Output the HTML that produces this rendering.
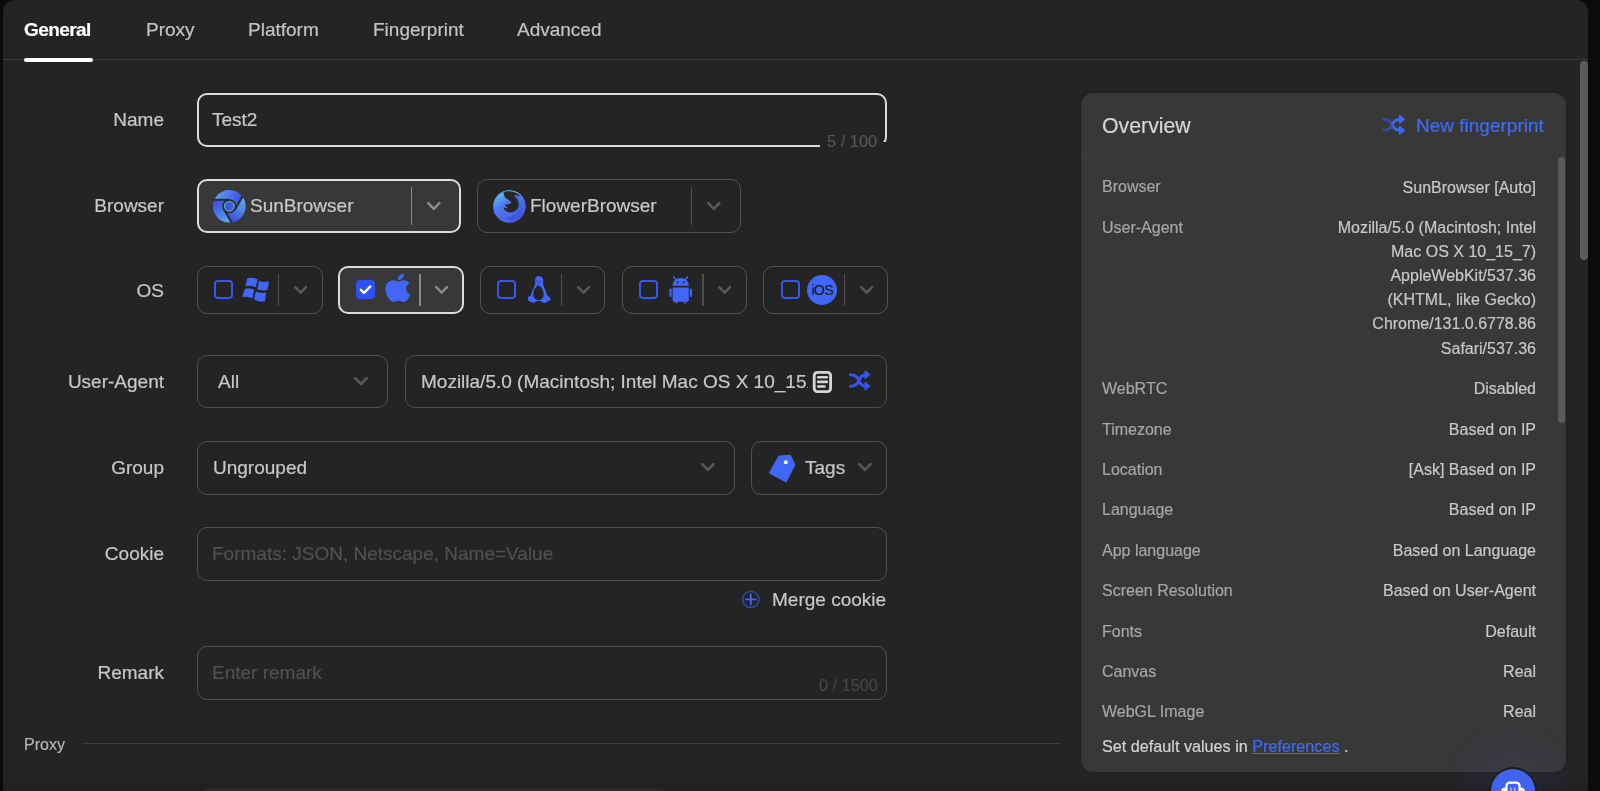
<!DOCTYPE html>
<html><head><meta charset="utf-8">
<style>
*{box-sizing:border-box;margin:0;padding:0}
html,body{-webkit-text-stroke:0.2px;width:1600px;height:791px;overflow:hidden;background:#0b0b0b;font-family:"Liberation Sans",sans-serif;position:relative}
.a{position:absolute}
#panel{position:absolute;left:3px;top:0;width:1585px;height:800px;background:#242424;border-radius:12px 12px 0 0}
.tab{position:absolute;top:18.8px;font-size:19px;color:#c4c4c4;line-height:22px;white-space:nowrap}
.tab.act{color:#fff;font-weight:bold;letter-spacing:-0.58px}
.lbl{position:absolute;right:1436px;font-size:19px;color:#c8c8c8;line-height:22px;white-space:nowrap;text-align:right}
.box{position:absolute;border:1.7px solid #525252;border-radius:10px}
.box.sel{border:2px solid #dcdcdc;background:#383838}
.txt{position:absolute;font-size:19px;color:#c8c8c8;line-height:22px;white-space:nowrap}
.ph{color:#505050}
.dv{position:absolute;width:1.5px;background:#4e4e4e}
svg{position:absolute;overflow:visible}
.chev{fill:none;stroke:#5a5a5a;stroke-width:2.5;stroke-linecap:round;stroke-linejoin:round}
.cb{position:absolute;width:19px;height:19px;border:2.5px solid #3456f5;border-radius:4px}
#ov{position:absolute;left:1081px;top:93px;width:485px;height:679px;background:#383838;border-radius:12px;box-shadow:0 0 3px rgba(0,0,0,0.25)}
.ol{position:absolute;left:1102px;font-size:16px;color:#a6a6a6;line-height:20px;white-space:nowrap}
.ovv{position:absolute;right:64px;font-size:16px;color:#c8c8c8;line-height:24.2px;white-space:nowrap;text-align:right}
</style></head><body><div id="root" style="position:absolute;left:0;top:0;width:1600px;height:791px;will-change:transform">
<div id="panel"></div>
<!-- tabs -->
<div class="tab act" style="left:24px">General</div>
<div class="tab" style="left:146px">Proxy</div>
<div class="tab" style="left:248px">Platform</div>
<div class="tab" style="left:373px">Fingerprint</div>
<div class="tab" style="left:517px">Advanced</div>
<div class="a" style="left:3px;top:59.2px;width:1585px;height:1px;background:#3a3a3a"></div>
<div class="a" style="left:24px;top:57.5px;width:69px;height:4px;border-radius:2px;background:#fff"></div>
<div class="a" style="left:1580px;top:61px;width:7.6px;height:199px;border-radius:4px;background:#5a5a5a"></div>

<!-- FORM -->
<!-- Name -->
<div class="lbl" style="top:109.3px">Name</div>
<div class="box sel" style="left:197px;top:93px;width:690px;height:54px;background:transparent"></div>
<div class="a" style="left:820px;top:142px;width:70px;height:8px;background:#242424"></div>
<div class="txt" style="left:212px;top:109.2px">Test2</div>
<div class="a" style="left:827px;top:132.2px;font-size:16.4px;color:#555;line-height:18px;white-space:nowrap">5 / 100</div>

<!-- Browser -->
<div class="lbl" style="top:195.3px">Browser</div>
<div class="box sel" style="left:197px;top:179px;width:264px;height:54px"></div>
<div class="txt" style="left:250px;top:195.2px">SunBrowser</div>
<div class="dv" style="left:410.5px;top:187px;height:38px;background:#8c8c8c"></div>
<svg style="left:427px;top:202px" width="14" height="9"><polyline class="chev" style="stroke:#8c8c8c" points="1.2,1.2 6.8,6.8 12.4,1.2"/></svg>
<div class="box" style="left:477px;top:179px;width:264px;height:54px"></div>
<div class="txt" style="left:530px;top:195.2px">FlowerBrowser</div>
<div class="dv" style="left:690.5px;top:187px;height:38px"></div>
<svg style="left:707px;top:202px" width="14" height="9"><polyline class="chev" points="1.2,1.2 6.8,6.8 12.4,1.2"/></svg>

<!-- OS -->
<div class="lbl" style="top:280.3px">OS</div>
<div class="box" style="left:197px;top:265.5px;width:125.5px;height:48px"></div>
<div class="box sel" style="left:338px;top:265.5px;width:125.5px;height:48px"></div>
<div class="box" style="left:480px;top:265.5px;width:125px;height:48px"></div>
<div class="box" style="left:621.5px;top:265.5px;width:125px;height:48px"></div>
<div class="box" style="left:763px;top:265.5px;width:125px;height:48px"></div>
<div class="cb" style="left:214px;top:280px"></div>
<div class="a" style="left:356px;top:280px;width:19px;height:19px;border-radius:4px;background:#2f50f2"></div>
<svg style="left:356px;top:280px" width="19" height="19"><polyline points="4.8,9.8 8,12.8 14.2,6.6" fill="none" stroke="#fff" stroke-width="2.4" stroke-linecap="round" stroke-linejoin="round"/></svg>
<div class="cb" style="left:497px;top:280px"></div>
<div class="cb" style="left:639px;top:280px"></div>
<div class="cb" style="left:780.5px;top:280px"></div>
<div class="dv" style="left:277.8px;top:273.5px;height:32px"></div>
<div class="dv" style="left:419.3px;top:273.5px;height:32px;background:#8a8a8a"></div>
<div class="dv" style="left:560.8px;top:273.5px;height:32px"></div>
<div class="dv" style="left:702.3px;top:273.5px;height:32px"></div>
<div class="dv" style="left:843.8px;top:273.5px;height:32px"></div>
<svg style="left:293.5px;top:285.5px" width="14" height="9"><polyline class="chev" points="1.2,1.2 6.6,6.6 12,1.2"/></svg>
<svg style="left:435px;top:285.5px" width="14" height="9"><polyline class="chev" style="stroke:#8a8a8a" points="1.2,1.2 6.6,6.6 12,1.2"/></svg>
<svg style="left:576.5px;top:285.5px" width="14" height="9"><polyline class="chev" points="1.2,1.2 6.6,6.6 12,1.2"/></svg>
<svg style="left:718px;top:285.5px" width="14" height="9"><polyline class="chev" points="1.2,1.2 6.6,6.6 12,1.2"/></svg>
<svg style="left:859.5px;top:285.5px" width="14" height="9"><polyline class="chev" points="1.2,1.2 6.6,6.6 12,1.2"/></svg>

<!-- User-Agent -->
<div class="lbl" style="top:371.3px">User-Agent</div>
<div class="box" style="left:197px;top:354.5px;width:191px;height:53.5px"></div>
<div class="txt" style="left:218px;top:371.2px">All</div>
<svg style="left:354px;top:377px" width="15" height="9"><polyline class="chev" points="1.2,1.2 7,7 12.8,1.2"/></svg>
<div class="box" style="left:404.5px;top:354.5px;width:482.5px;height:53.5px"></div>
<div class="txt" style="left:421px;top:371.2px">Mozilla/5.0 (Macintosh; Intel Mac OS X 10_15<span style="font-size:7px">.</span></div>

<!-- Group -->
<div class="lbl" style="top:456.9px">Group</div>
<div class="box" style="left:197px;top:441px;width:538px;height:53.5px"></div>
<div class="txt" style="left:213px;top:457.2px">Ungrouped</div>
<svg style="left:700.5px;top:463px" width="15" height="9"><polyline class="chev" points="1.2,1.2 6.9,6.9 12.6,1.2"/></svg>
<div class="box" style="left:751px;top:441px;width:136px;height:53.5px"></div>
<div class="txt" style="left:805px;top:457.2px">Tags</div>
<svg style="left:858px;top:463px" width="15" height="9"><polyline class="chev" points="1.2,1.2 6.9,6.9 12.6,1.2"/></svg>

<!-- Cookie -->
<div class="lbl" style="top:543.3px">Cookie</div>
<div class="box" style="left:197px;top:527px;width:690px;height:53.5px"></div>
<div class="txt ph" style="left:212px;top:543.2px">Formats: JSON, Netscape, Name=Value</div>
<div class="txt" style="left:772px;top:589.2px">Merge cookie</div>

<!-- Remark -->
<div class="lbl" style="top:662.3px">Remark</div>
<div class="box" style="left:197px;top:646px;width:690px;height:53.5px"></div>
<div class="txt ph" style="left:212px;top:662.2px">Enter remark</div>
<div class="a" style="left:819px;top:676px;font-size:16.3px;color:#464646;line-height:18px;white-space:nowrap">0 / 1500</div>

<!-- Proxy section -->
<div class="a" style="left:24px;top:735px;font-size:16px;color:#b4b4b4;line-height:20px">Proxy</div>
<div class="a" style="left:82px;top:743px;width:978px;height:1px;background:#3c3c3c"></div>
<div class="a" style="left:200px;top:788px;width:468px;height:20px;border-radius:10px;background:#2e2e2e"></div>
<div class="a" style="left:3px;top:774px;width:1585px;height:17px;background:linear-gradient(rgba(0,0,0,0),rgba(0,0,0,0.12))"></div>

<!-- OVERVIEW -->
<div id="ov"></div>
<div class="a" style="left:1102px;top:114px;font-size:21.3px;color:#d6d6d6;line-height:24px;white-space:nowrap">Overview</div>
<div class="a" style="left:1416px;top:114px;font-size:19px;color:#3e6cf4;line-height:24px;white-space:nowrap">New fingerprint</div>
<div class="a" style="left:1081px;top:156px;width:485px;height:1px;background:#3a3a3a"></div>
<div class="a" style="left:1558px;top:157px;width:7px;height:265.5px;border-radius:4px;background:#5a5a5a"></div>

<div class="ol" style="top:177.2px">Browser</div>
<div class="ovv" style="top:175.6px">SunBrowser [Auto]</div>
<div class="ol" style="top:217.6px">User-Agent</div>
<div class="ovv" style="top:215.6px">Mozilla/5.0 (Macintosh; Intel<br>Mac OS X 10_15_7)<br>AppleWebKit/537.36<br>(KHTML, like Gecko)<br>Chrome/131.0.6778.86<br>Safari/537.36</div>
<div class="ol" style="top:379.4px">WebRTC</div><div class="ovv" style="top:377.3px">Disabled</div>
<div class="ol" style="top:419.8px">Timezone</div><div class="ovv" style="top:417.7px">Based on IP</div>
<div class="ol" style="top:459.9px">Location</div><div class="ovv" style="top:457.8px">[Ask] Based on IP</div>
<div class="ol" style="top:500.3px">Language</div><div class="ovv" style="top:498.2px">Based on IP</div>
<div class="ol" style="top:540.9px">App language</div><div class="ovv" style="top:538.8px">Based on Language</div>
<div class="ol" style="top:581.3px">Screen Resolution</div><div class="ovv" style="top:579.2px">Based on User-Agent</div>
<div class="ol" style="top:622.0px">Fonts</div><div class="ovv" style="top:619.9px">Default</div>
<div class="ol" style="top:662.3px">Canvas</div><div class="ovv" style="top:660.2px">Real</div>
<div class="ol" style="top:702.4px">WebGL Image</div><div class="ovv" style="top:700.3px">Real</div>
<div class="a" style="left:1102px;top:722.5px;width:434px;height:1px;background:#3b3b3b"></div>
<div class="a" style="left:1102px;top:736.4px;font-size:16.2px;color:#d4d4d4;line-height:20px;white-space:nowrap">Set default values in <span style="color:#3e6cf4;text-decoration:underline">Preferences</span> .</div>
<div class="a" style="left:1440px;top:720px;width:145px;height:71px;background:radial-gradient(circle at 72px 70px, rgba(70,90,220,0.10) 0, rgba(70,90,220,0.05) 40px, rgba(70,90,220,0) 70px)"></div>
<div class="a" style="left:1489px;top:767px;width:48px;height:48px;border-radius:50%;background:#1e1e1e"></div>
<div class="a" style="left:1491px;top:769px;width:44px;height:44px;border-radius:50%;background:#4164f0"></div>

<!-- ICONS -->
<!-- SunBrowser -->
<svg style="left:212.9px;top:189.7px" width="32.6" height="32.6" viewBox="0 0 32 32">
 <defs>
  <linearGradient id="sb1" gradientUnits="userSpaceOnUse" x1="3" y1="6" x2="26" y2="12"><stop offset="0" stop-color="#5c9ef2"/><stop offset="1" stop-color="#3d52e2"/></linearGradient>
  <linearGradient id="sb2" gradientUnits="userSpaceOnUse" x1="30" y1="9" x2="17" y2="29"><stop offset="0" stop-color="#5eaaf2"/><stop offset="1" stop-color="#3c50e0"/></linearGradient>
  <linearGradient id="sb3" gradientUnits="userSpaceOnUse" x1="14" y1="31" x2="3" y2="12"><stop offset="0" stop-color="#5aa2f0"/><stop offset="1" stop-color="#3c52e2"/></linearGradient>
 </defs>
 <path d="M1.34 9.6 A16 16 0 0 1 28.87 6.5 L21.54 19.2 A6.4 6.4 0 0 0 16 9.6 Z" fill="url(#sb1)"/>
 <path d="M28.87 6.5 A16 16 0 0 1 17.8 31.9 L10.46 19.2 A6.4 6.4 0 0 0 21.54 19.2 Z" fill="url(#sb2)"/>
 <path d="M17.8 31.9 A16 16 0 0 1 1.34 9.6 L16 9.6 A6.4 6.4 0 0 0 10.46 19.2 Z" fill="url(#sb3)"/>
 <g stroke="#2b2b2b" stroke-width="1.9" fill="none">
  <line x1="16.5" y1="9.6" x2="0.5" y2="9.6"/>
  <line x1="21.3" y1="19.7" x2="29.3" y2="5.8"/>
  <line x1="10.7" y1="18.8" x2="18.7" y2="32.6"/>
 </g>
 <circle cx="16" cy="16" r="6.9" fill="#2b2b2b"/>
 <circle cx="16" cy="16" r="5.3" fill="#5cc0e6"/>
 <circle cx="16" cy="16" r="4.3" fill="#3f5ad8"/>
</svg>
<!-- FlowerBrowser -->
<svg style="left:493px;top:189.6px" width="32.6" height="32.6" viewBox="0 0 32 32">
 <defs>
  <linearGradient id="fg1" gradientUnits="userSpaceOnUse" x1="4" y1="3" x2="20" y2="30"><stop offset="0" stop-color="#5cc2ea"/><stop offset="0.4" stop-color="#507bee"/><stop offset="1" stop-color="#4a62e6"/></linearGradient>
  <linearGradient id="fg2" gradientUnits="userSpaceOnUse" x1="24" y1="2" x2="26" y2="26"><stop offset="0" stop-color="#5ccaea"/><stop offset="0.3" stop-color="#4a70ee"/><stop offset="1" stop-color="#3f55e0"/></linearGradient>
 </defs>
 <circle cx="16" cy="16.2" r="15.9" fill="url(#fg1)"/>
 <path d="M9.4 2.2 C13 0.4 20 0.2 24.5 2.8 C28 5 30.5 8 31.4 12 L31.9 16 C31.9 21 29 25.5 24 28 C20 30 14 30 10.5 27.5 C16 27.5 21.5 25 23.8 20.5 C26 16 25.2 10.5 21.5 8 Z" fill="url(#fg2)"/>
 <path d="M10.2 2 C13 1 18 0.8 22.5 2.6 C25 3.8 27 6 27.5 7.2 C25.5 5.8 23 5.2 20.6 5.6 C24 7.5 25.6 11 25.3 14.6 C24.9 19.6 20.8 22.3 16.6 22.1 C12.8 21.9 10.4 19.4 10.2 16.8 C11.6 18 13.4 18.2 14.5 17.6 C13 16.5 12 15.4 11.8 14 C14.4 14.4 17.2 13.8 18.2 12 C17 10.4 14.6 9.6 12.6 8.2 C11.2 6.6 10.6 4.4 10.2 2 Z" fill="#262626"/>
 <path d="M20.6 5.6 C23 5.2 25.5 5.8 27.5 7.2 C25 6.8 23.5 7.2 22.6 7.6 C24.6 9.6 25.6 12 25.3 14.6 C24.8 10.6 23 7.2 20.6 5.6 Z" fill="#4a66ea"/>
</svg>
<!-- Windows -->
<svg style="left:238px;top:272px" width="36" height="34" viewBox="0 0 36 34" fill="#4266f6">
 <path d="M9.2,6.6 Q14,4.4 19.6,7.4 L17.9,15.3 Q12.6,12.6 7.4,14.3 Z"/>
 <path d="M21,8.7 Q25.5,10.8 31,9.3 L29.4,18 Q24,19.2 19.2,17.3 Z"/>
 <path d="M6.9,16.8 Q11.5,15.1 16.2,17.7 L14.5,26.3 Q9.6,23.9 4.1,25 Z"/>
 <path d="M17.8,19.6 Q22.6,21.6 28.2,20.5 L26.8,29.3 Q21.2,30.6 16.1,27.6 Z"/>
</svg>
<!-- Apple -->
<svg style="left:380px;top:270px" width="34" height="34" viewBox="0 0 34 34">
 <g transform="translate(2.6,3.4) scale(1.27,1.19)" fill="#4266f6">
 <path d="M12.152 6.896c-.948 0-2.415-1.078-3.96-1.04-2.04.027-3.91 1.183-4.961 3.014-2.117 3.675-.546 9.103 1.519 12.09 1.013 1.454 2.208 3.09 3.792 3.039 1.52-.065 2.09-.987 3.935-.987 1.831 0 2.35.987 3.96.948 1.637-.026 2.676-1.48 3.676-2.948 1.156-1.688 1.636-3.325 1.662-3.415-.039-.013-3.182-1.221-3.220-4.857-.026-3.04 2.48-4.494 2.597-4.559-1.429-2.090-3.623-2.324-4.390-2.376-2-.156-3.675 1.090-4.610 1.090zM15.530 3.830c.843-1.012 1.400-2.427 1.245-3.830-1.207.052-2.662.805-3.532 1.818-.780.896-1.454 2.338-1.273 3.714 1.338.104 2.715-.688 3.559-1.701"/>
 </g>
</svg>
<!-- Linux -->
<svg style="left:522px;top:270px" width="34" height="36" viewBox="0 0 34 36">
 <path fill="#4266f6" d="M16.8,6.1 C14.6,6.1 13.1,7.8 13.1,10.4 L13.1,14.6 C12.4,16.6 11.3,18.4 10.4,20.6 C9.6,22.6 9.1,24.4 8.6,25.9 C7.4,26.2 6.2,26.6 5.9,27.4 C5.8,28.6 5.9,29.6 6.2,30.6 C7.8,31.6 9.6,32.4 11.4,32.8 C12.6,32.4 13.6,31.6 14.6,31.1 L18.6,31.1 C19.8,31.8 21,32.6 22.6,32.9 C24.6,32.2 26.6,31 28.7,29.4 C28.4,28.4 27.8,27.2 26.9,26.4 C25.9,26 25.2,25.4 24.7,24.6 C24.3,22.4 23.6,20.2 22.6,18.4 C21.9,17 21.3,15.8 21.2,14.6 L21.2,10.4 C21.2,7.8 19.2,6.1 16.8,6.1 Z"/>
 <path fill="#242424" d="M16.4,15.2 C19.4,16.8 21.7,20.6 21.7,24.2 C21.7,27.8 19.4,30 16.5,30 C13.6,30 11.3,27.8 11.3,24.2 C11.3,20.6 13.4,16.8 16.4,15.2 Z"/>
 <path fill="#4266f6" d="M5.9,27.4 C7.4,26.6 9.6,26.6 11,27.6 C12.6,28.6 14,30 14.6,31.1 C13.6,31.6 12.6,32.4 11.4,32.8 C9.6,32.4 7.8,31.6 6.2,30.6 Z"/>
 <path fill="#4266f6" d="M28.7,29.4 C27,28 25,27.2 23.4,27.4 C21.2,28 19.6,29.6 18.6,31.1 C19.8,31.8 21,32.6 22.6,32.9 C24.6,32.2 26.6,31 28.7,29.4 Z"/>
 <circle cx="15.1" cy="11.3" r="0.75" fill="#2c3c94"/><circle cx="18.3" cy="11.3" r="0.75" fill="#2c3c94"/>
 <path d="M15.6,13.2 L17.6,13.2 L16.6,14.3 Z" fill="#2c3c94"/>
</svg>
<!-- Android -->
<svg style="left:669px;top:276px" width="24" height="28" viewBox="0 0 24 28" fill="#4266f6">
 <line x1="4.6" y1="0.8" x2="6.6" y2="3.3" stroke="#4266f6" stroke-width="1.4" stroke-linecap="round"/>
 <line x1="18.6" y1="0.8" x2="16.6" y2="3.3" stroke="#4266f6" stroke-width="1.4" stroke-linecap="round"/>
 <path d="M3.6,9.7 C3.6,5.2 7.2,2.1 11.6,2.1 C16,2.1 19.8,5.2 19.8,9.7 Z"/>
 <circle cx="8.6" cy="6.2" r="0.95" fill="#242424"/><circle cx="14.6" cy="6.2" r="0.95" fill="#242424"/>
 <path d="M3.6,11.6 L19.8,11.6 L19.8,24.2 Q19.8,25.8 18.2,25.8 L5.2,25.8 Q3.6,25.8 3.6,24.2 Z"/>
 <rect x="6.4" y="24" width="2.2" height="3.4" rx="1"/><rect x="14.8" y="24" width="2.2" height="3.4" rx="1"/>
 <rect x="0.4" y="12.4" width="2.2" height="8.6" rx="1.1"/><rect x="20.8" y="12.4" width="2.2" height="8.6" rx="1.1"/>
</svg>
<!-- iOS -->
<div class="a" style="left:807px;top:275px;width:30.4px;height:30.4px;border-radius:50%;background:#4266f6"></div>
<div class="a" style="left:807px;top:281px;width:30.4px;text-align:center;font-size:14.2px;line-height:18px;color:#1e1e1e;letter-spacing:-0.7px">iOS</div>

<!-- UA doc icon -->
<svg style="left:812px;top:370px" width="21" height="24" viewBox="0 0 21 24">
 <rect x="2.2" y="2.4" width="16.4" height="19.2" rx="3.2" fill="none" stroke="#d6d6da" stroke-width="2.8"/>
 <g stroke="#d6d6da" stroke-width="2.6" stroke-linecap="round"><line x1="6.2" y1="7.2" x2="14.8" y2="7.2"/><line x1="6.2" y1="11.9" x2="14.8" y2="11.9"/><line x1="6.2" y1="16.5" x2="12.4" y2="16.5"/></g>
</svg>
<!-- UA shuffle -->
<svg style="left:849px;top:370px" width="22" height="22" viewBox="0 0 22 22">
 <g fill="none" stroke="#3454f6" stroke-width="3" stroke-linecap="round">
  <path d="M1.5,4.7 C6.4,4.7 8.5,6.6 9.9,10.5 C11.3,14.4 13.4,16.2 17.4,16.2"/>
  <path d="M1.5,16.3 C6.4,16.3 8.5,14.4 9.9,10.5 C11.3,6.6 13.4,4.7 17.4,4.7"/>
 </g>
 <g fill="#3454f6" stroke="#3454f6" stroke-width="1.5" stroke-linejoin="round">
  <polygon points="16.2,1.2 20.4,4.7 16.2,8.2"/>
  <polygon points="16.2,12.7 20.4,16.2 16.2,19.7"/>
 </g>
</svg>
<!-- Tag -->
<svg style="left:768px;top:454px" width="28" height="29" viewBox="0 0 28 29">
 <polygon points="11.4,2.6 22,2 26,10.8 17.8,27 2.4,18.6" fill="#4266f6" stroke="#4266f6" stroke-width="2.4" stroke-linejoin="round"/>
 <circle cx="17.8" cy="8.2" r="2" fill="#fff"/>
</svg>
<!-- Merge plus -->
<svg style="left:741px;top:590.3px" width="20" height="20" viewBox="0 0 20 20">
 <circle cx="9.8" cy="9.4" r="8.1" fill="none" stroke="#30449c" stroke-width="1.8"/>
 <g stroke="#3d62f4" stroke-width="1.9" stroke-linecap="round"><line x1="4.9" y1="9.4" x2="14.7" y2="9.4"/><line x1="9.8" y1="4.5" x2="9.8" y2="14.3"/></g>
</svg>
<!-- Overview shuffle -->
<svg style="left:1382px;top:114px" width="24" height="22" viewBox="0 0 24 22">
 <defs><linearGradient id="shg" gradientUnits="userSpaceOnUse" x1="0" y1="0" x2="24" y2="0"><stop offset="0" stop-color="#37489c"/><stop offset="0.36" stop-color="#384aa4"/><stop offset="0.47" stop-color="#3f66f6"/><stop offset="1" stop-color="#3f66f6"/></linearGradient></defs>
 <g fill="none" stroke="url(#shg)" stroke-width="2.9" stroke-linecap="round">
  <path d="M1.8,5.3 C6.8,5.3 8.9,7.2 10.2,10.8 C11.5,14.4 13.6,16.3 18.4,16.3"/>
  <path d="M1.8,16.3 C6.8,16.3 8.9,14.4 10.2,10.8 C11.5,7.2 13.6,5.3 18.4,5.3"/>
 </g>
 <g fill="#3f66f6" stroke="#3f66f6" stroke-width="1.5" stroke-linejoin="round">
  <polygon points="17.6,1.6 22.2,5.3 17.6,9"/>
  <polygon points="17.6,12.6 22.2,16.3 17.6,20"/>
 </g>
</svg>
<!-- robot -->
<svg style="left:1491px;top:769px" width="44" height="22" viewBox="0 0 44 22">
 <path d="M14.3,22 L14.3,19.6 Q11.8,19.6 11,22" fill="none" stroke="#fff" stroke-width="2.2"/>
 <path d="M29.7,22 L29.7,19.6 Q32.2,19.6 33,22" fill="none" stroke="#fff" stroke-width="2.2"/>
 <path d="M15.4,22 L15.4,17.5 Q15.4,13.7 19.2,13.7 L24.8,13.7 Q28.6,13.7 28.6,17.5 L28.6,22" fill="none" stroke="#fff" stroke-width="2.2"/>
 <rect x="19" y="18.4" width="1.6" height="4" rx="0.8" fill="#9fb0ff"/><rect x="23" y="18.4" width="1.6" height="4" rx="0.8" fill="#9fb0ff"/>
</svg>
</div></body></html>
